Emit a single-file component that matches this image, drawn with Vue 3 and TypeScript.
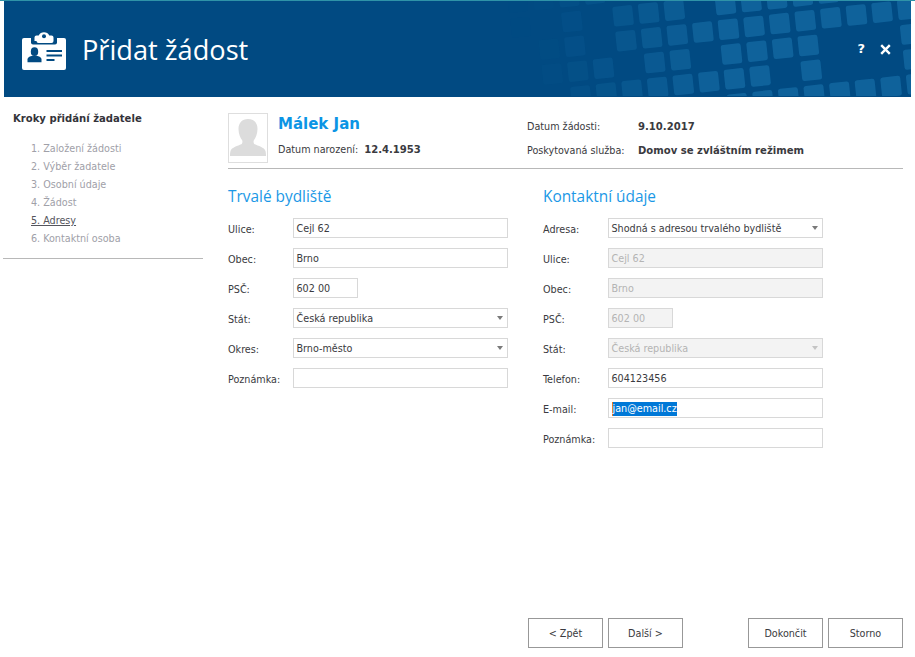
<script setup lang="ts">
interface Row { label: string; value?: string; kind?: 'select'; short?: boolean; disabled?: boolean; selected?: boolean }
const steps = ['1. Založení žádosti', '2. Výběr žadatele', '3. Osobní údaje', '4. Žádost', '5. Adresy', '6. Kontaktní osoba']
const address: Row[] = [
  { label: 'Ulice:', value: 'Cejl 62' },
  { label: 'Obec:', value: 'Brno' },
  { label: 'PSČ:', value: '602 00', short: true },
  { label: 'Stát:', value: 'Česká republika', kind: 'select' },
  { label: 'Okres:', value: 'Brno-město', kind: 'select' },
  { label: 'Poznámka:' },
]
const contact: Row[] = [
  { label: 'Adresa:', value: 'Shodná s adresou trvalého bydliště', kind: 'select' },
  { label: 'Ulice:', value: 'Cejl 62', disabled: true },
  { label: 'Obec:', value: 'Brno', disabled: true },
  { label: 'PSČ:', value: '602 00', short: true, disabled: true },
  { label: 'Stát:', value: 'Česká republika', kind: 'select', disabled: true },
  { label: 'Telefon:', value: '604123456' },
  { label: 'E-mail:', value: 'jan@email.cz', selected: true },
  { label: 'Poznámka:' },
]
// [row, first, last] cells of the lattice in the header artwork
const spans: [number, number, number][] = [
  [-2, -11, -8], [-1, -11, -11], [-1, -9, -9], [-1, -7, -5], [-1, -3, 1],
  [0, -10, -9], [0, -7, 4],
  [1, -10, -8], [1, -6, -5], [1, -3, 0], [1, 4, 4],
  [2, -9, -2], [2, 0, 0], [2, 4, 4],
  [3, -3, 4],
]
const squares = spans.flatMap(([j, a, b]) => {
  const out: { key: string; x: number; y: number; o: number }[] = []
  for (let i = a; i <= b; i++) {
    const x = 805.3 + 25.6 * i + 3 * j
    const y = 20.7 - 2.85 * i + 24.8 * j
    const o = Math.min(1, Math.max(0.03, (x - 530) / 190)) * 0.25
    out.push({ key: `${i}_${j}`, x: x - 4, y, o })
  }
  return out
})
</script>

<template>
  <div class="page">
    <header class="header">
      <svg class="pattern" width="907" height="96" viewBox="0 0 907 96" aria-hidden="true">
        <rect
          v-for="s in squares"
          :key="s.key"
          :x="s.x - 10"
          :y="s.y - 10"
          width="20"
          height="20"
          rx="2.5"
          fill="#3cace6"
          :opacity="s.o"
          :transform="`rotate(-6 ${s.x} ${s.y})`"
        />
      </svg>
      <svg class="logo" width="44" height="40" viewBox="0 0 44 40" aria-hidden="true">
        <path fill="#fff" d="M2 8h40a2 2 0 0 1 2 2v28a2 2 0 0 1-2 2H2a2 2 0 0 1-2-2V10a2 2 0 0 1 2-2z" />
        <path fill="#014a82" d="M11 14.500h22a2 2 0 0 0 2-2V8H9v4.500a2 2 0 0 0 2 2z" />
        <path fill="#fff" d="M12.500 11V7.500a2 2 0 0 1 2-2h2.200a6 6 0 0 1 10.600 0h2.200a2 2 0 0 1 2 2V11a2 2 0 0 1-2 2h-13a2 2 0 0 1-2-2z" />
        <circle cx="22" cy="6.200" r="2" fill="#014a82" />
        <ellipse cx="12.500" cy="21.700" rx="3.700" ry="4.400" fill="#014a82" />
        <path fill="#014a82" d="M5.500 32.300v-2.800c0-2.300 2.500-3.300 5-3.800h4c2.500.5 5 1.500 5 3.800v2.800z" />
        <path fill="#014a82" d="M24.500 20h15.500v2H24.500zM24.500 24.500h15.500v2H24.500zM24.500 29h8v2h-8z" />
      </svg>
      <h1 class="title">Přidat žádost</h1>
      <div class="actions">
        <span class="help">?</span>
        <svg width="11" height="11" viewBox="0 0 11 11" aria-hidden="true">
          <path d="M1.200 1.200l8.600 8.600M9.800 1.200l-8.600 8.600" stroke="#fff" stroke-width="2.400" fill="none" />
        </svg>
      </div>
    </header>

    <div class="body">
      <aside class="sidebar">
        <div class="side-title">Kroky přidání žadatele</div>
        <ol class="steps">
          <li v-for="(s, i) in steps" :key="s" :class="{ active: i === 4 }">{{ s }}</li>
        </ol>
      </aside>

      <main class="main">
        <section class="person">
          <div class="avatar">
            <svg width="38" height="48" viewBox="0 0 38 48" aria-hidden="true">
              <path fill="#dcdcdc" d="M19 5c6 0 9.500 4 9.500 10 0 5-2 9-3.500 11-.8 1.200-.5 3.500.8 4.300 3 1.600 9.700 3 10.700 6.700.4 1.500.5 3 .5 5H1c0-2 .1-3.500.5-5 1-3.700 7.700-5.100 10.700-6.700 1.300-.8 1.600-3.100.8-4.300-1.500-2-3.500-6-3.500-11 0-6 3.500-10 9.500-10z" />
            </svg>
          </div>
          <div class="who">
            <div class="name">Málek Jan</div>
            <div class="birth"><span>Datum narození:</span><b>12.4.1953</b></div>
          </div>
          <div class="request">
            <div class="req-row"><span>Datum žádosti:</span><b>9.10.2017</b></div>
            <div class="req-row"><span>Poskytovaná služba:</span><b>Domov se zvláštním režimem</b></div>
          </div>
        </section>

        <div class="columns">
          <section class="col">
            <h2>Trvalé bydliště</h2>
            <div v-for="r in address" :key="r.label" class="row">
              <label>{{ r.label }}</label>
              <div class="field" :class="{ short: r.short, select: r.kind === 'select' }">{{ r.value }}</div>
            </div>
          </section>
          <section class="col">
            <h2>Kontaktní údaje</h2>
            <div v-for="r in contact" :key="r.label" class="row">
              <label>{{ r.label }}</label>
              <div class="field" :class="{ short: r.short, select: r.kind === 'select', disabled: r.disabled }">
                <span v-if="r.selected" class="selection">{{ r.value }}</span>
                <template v-else>{{ r.value }}</template>
              </div>
            </div>
          </section>
        </div>

        <footer class="footer">
          <button type="button">&lt; Zpět</button>
          <button type="button">Další &gt;</button>
          <span class="spacer"></span>
          <button type="button">Dokončit</button>
          <button type="button">Storno</button>
        </footer>
      </main>
    </div>
  </div>
</template>

<style scoped>
.page {
  width: 915px;
  height: 657px;
  box-sizing: border-box;
  border-top: 1px solid #2f93a8;
  display: flex;
  flex-direction: column;
  background: #fff;
  color: #3a3a40;
  font-family: "DejaVu Sans", "Liberation Sans", sans-serif;
  font-stretch: condensed;
  font-size: 10.7px;
  overflow: hidden;
}
.header {
  position: relative;
  flex: none;
  height: 96px;
  margin: 0 4px;
  width: 907px;
  background: #014a82;
  display: flex;
  align-items: center;
  color: #fff;
  overflow: hidden;
}
.pattern { position: absolute; left: 0; top: -1px; }
.logo { position: relative; margin: 0 0 0 18px; top: 1px; }
.title {
  position: relative;
  margin: 0 0 0 16px;
  font-family: "Open Sans", sans-serif;
  font-stretch: normal;
  font-weight: 400;
  font-size: 27.2px;
}
.actions {
  position: relative;
  margin-left: auto;
  margin-right: 20px;
  display: flex;
  align-items: center;
  gap: 15px;
}
.help { font-weight: 700; font-stretch: normal; font-size: 13px; line-height: 14px; }
.body { flex: 1; display: flex; min-height: 0; }
.sidebar {
  flex: none;
  width: 200px;
  height: 162px;
  margin-left: 3px;
  box-sizing: border-box;
  border-bottom: 1px solid #b8b8b8;
  padding: 15px 0 0 10px;
}
.side-title { font-weight: 700; font-size: 11.200px; line-height: 14px; color: #33333a; }
.steps { list-style: none; margin: 14px 0 0; padding: 0 0 0 18px; color: #a0a0a8; }
.steps li { height: 18px; line-height: 18px; }
.steps li.active { color: #55555c; text-decoration: underline; }
.main {
  flex: none;
  width: 675px;
  margin-left: 25px;
  padding-top: 16px;
  box-sizing: border-box;
  display: flex;
  flex-direction: column;
}
.person {
  display: flex;
  box-sizing: border-box;
  border-bottom: 1px solid #b8b8b8;
  height: 56px;
}
.avatar {
  width: 40px;
  height: 50px;
  box-sizing: border-box;
  border: 1px solid #dedede;
}
.avatar svg { display: block; }
.who { width: 249px; margin-left: 10px; }
.name { color: #0b95e5; font-weight: 700; font-stretch: normal; font-size: 15px; line-height: 20px; padding-top: 1px; }
.birth { margin-top: 9px; line-height: 14px; display: flex; gap: 6px; }
.request { padding-top: 7px; }
.req-row { display: flex; line-height: 14px; margin-bottom: 10px; }
.req-row span { width: 111px; }
b { font-weight: 700; font-size: 11.200px; color: #3a3a40; }
.columns { display: flex; margin-top: 16px; }
.col { width: 315px; }
h2 {
  margin: 0 0 9px;
  font-family: "Open Sans", sans-serif;
  font-stretch: normal;
  font-weight: 400;
  font-size: 15.400px;
  line-height: 24px;
  color: #1b98e6;
}
.row { display: flex; align-items: center; height: 20px; margin-bottom: 10px; }
.row label { width: 65px; flex: none; padding-top: 2px; }
.field {
  position: relative;
  box-sizing: border-box;
  width: 215px;
  height: 20px;
  line-height: 19px;
  padding-left: 2.500px;
  border: 1px solid #d8d8d8;
  white-space: nowrap;
}
.field.short { width: 65px; }
.field.select::after {
  content: "";
  position: absolute;
  right: 4px;
  top: 7px;
  border-left: 3.500px solid transparent;
  border-right: 3.500px solid transparent;
  border-top: 4px solid #7a7a7a;
}
.field.disabled { background: #f3f3f3; color: #b4b4b4; }
.field.disabled::after { border-top-color: #c4c4c4; }
.selection { display: inline-block; line-height: 14px; background: #0078d7; color: #fff; border-left: 1px solid #e87a20; }
.footer { margin-top: auto; margin-bottom: 9px; margin-left: 300px; display: flex; gap: 5px; }
.spacer { width: 55px; }
button {
  width: 75px;
  height: 30px;
  padding: 0;
  background: #fff;
  border: 1px solid #989898;
  color: #3a3a40;
  font: inherit;
}
</style>
